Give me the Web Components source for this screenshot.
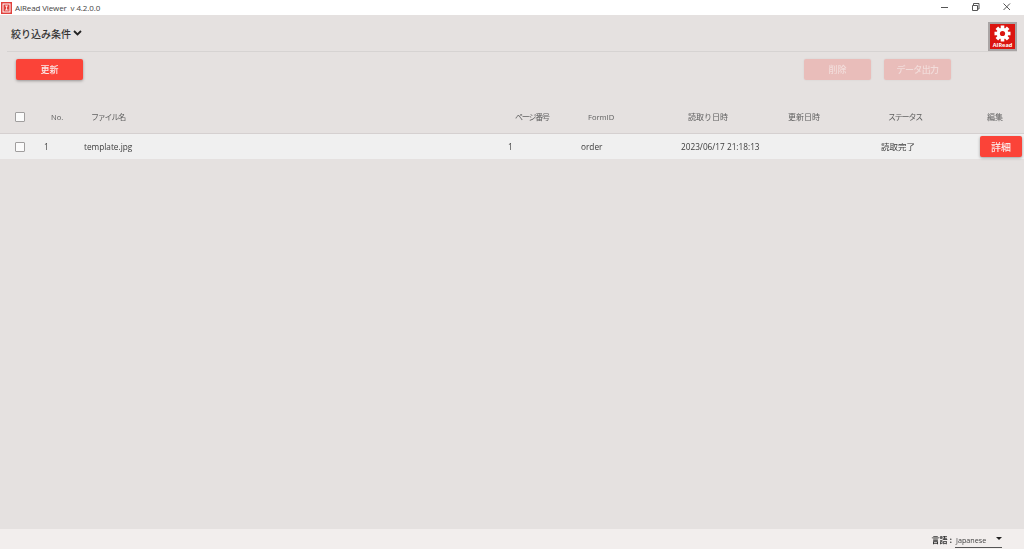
<!DOCTYPE html>
<html lang="ja">
<head>
<meta charset="utf-8">
<title>AIRead Viewer</title>
<style>
html, body { margin: 0; height: 100%; }
body {
  font-family: "Open Sans", "Noto Sans CJK JP", sans-serif;
  background: #e5e1e0;
  overflow: hidden;
}
ar-app { height: 549px; }
</style>
</head>
<body>
<ar-app>
  <ar-titlebar title-text="AIRead Viewer  v 4.2.0.0"></ar-titlebar>
  <ar-filter label="絞り込み条件"></ar-filter>
  <ar-toolbar>
    <ar-button slot="left">更新</ar-button>
    <ar-button slot="right" disabled>削除</ar-button>
    <ar-button slot="right" disabled style="letter-spacing:-.6px">データ出力</ar-button>
  </ar-toolbar>
  <ar-table>
    <ar-row head>
      <ar-check></ar-check>
      <span class="lat">No.</span><span class="kana">ファイル名</span><span class="kana">ページ番号</span><span class="lat">FormID</span>
      <span>読取り日時</span><span>更新日時</span><span class="kana">ステータス</span><span>編集</span>
    </ar-row>
    <ar-row>
      <ar-check></ar-check>
      <span>1</span><span>template.jpg</span><span>1</span><span>order</span>
      <span>2023/06/17 21:18:13</span><span></span><span class="ja">読取完了</span>
      <ar-button small>詳細</ar-button>
    </ar-row>
  </ar-table>
  <ar-footer label="言語 :" value="Japanese"></ar-footer>
</ar-app>

<script>
class App extends HTMLElement {
  connectedCallback() {
    this.attachShadow({ mode: 'open' }).innerHTML = `
      <style>
        :host { display: flex; flex-direction: column; width: 1024px; background: #e5e1e0; filter: blur(.3px); }
        .grow { flex: 1; display: flex; flex-direction: column; min-height: 0; }
      </style>
      <div class="grow"><slot></slot></div>`;
  }
}

class Titlebar extends HTMLElement {
  connectedCallback() {
    this.attachShadow({ mode: 'open' }).innerHTML = `
      <style>
        :host { display: flex; align-items: center; height: 15px; background: #fff; flex: none; }
        .logo { margin-left: 1px; width: 11px; height: 12px; display: block; }
        .name { margin-left: 3px; font: 8px "Open Sans", sans-serif; letter-spacing: -.13px; color: #444; white-space: pre; }
        .win { margin-left: auto; margin-right: 2px; display: flex; }
        .win svg { width: 31px; height: 15px; display: block; }
      </style>
      <svg class="logo" viewBox="0 0 11 12">
        <rect width="11" height="12" fill="#e0413c"/>
        <rect x="2" y="2" width="7" height="8" fill="none" stroke="#fff" stroke-width="1"/>
        <path d="M4 4h3M5.5 4v4M4 8h3.5" stroke="#fff" stroke-width=".8" fill="none"/>
      </svg>
      <span class="name">${this.getAttribute('title-text')}</span>
      <div class="win">
        <svg viewBox="0 0 31 15"><path d="M12 7.5h7" stroke="#555" stroke-width="1"/></svg>
        <svg viewBox="0 0 31 15"><path d="M13.5 5V3.5h5.5V9h-1.5M12.5 5.5h5V10.5h-5z" stroke="#555" stroke-width="1" fill="none"/></svg>
        <svg viewBox="0 0 31 15"><path d="M12.5 3.5l6.5 6.5M19 3.5l-6.5 6.5" stroke="#555" stroke-width="1" fill="none"/></svg>
      </div>`;
  }
}

class Filter extends HTMLElement {
  connectedCallback() {
    this.attachShadow({ mode: 'open' }).innerHTML = `
      <style>
        :host { display: flex; align-items: center; height: 36px; margin: 0 7px; padding-left: 4px;
          border-bottom: 1px solid #d6d3d2; flex: none; }
        .lab { font: 500 10px "Noto Sans CJK JP", sans-serif; color: #333; }
        .chev { width: 9px; height: 6px; margin-left: 2px; }
        .gear { margin-left: auto; align-self: flex-end; width: 29px; height: 29px; display: block; }
      </style>
      <span class="lab">${this.getAttribute('label')}</span>
      <svg class="chev" viewBox="0 0 9 6"><path d="M1 1l3.5 3.5L8 1" stroke="#222" stroke-width="1.8" fill="none"/></svg>
      <svg class="gear" viewBox="0 0 29 29">
        <rect width="29" height="29" fill="#a9a5a5"/>
        <rect x="2" y="2" width="25" height="25" fill="#db1510"/>
        <g transform="translate(14.5 11.5)" fill="#fff">
          <rect x="-1.8" y="-8" width="3.6" height="16"/>
          <rect x="-1.8" y="-8" width="3.6" height="16" transform="rotate(45)"/>
          <rect x="-1.8" y="-8" width="3.6" height="16" transform="rotate(90)"/>
          <rect x="-1.8" y="-8" width="3.6" height="16" transform="rotate(135)"/>
          <circle r="5.8"/>
          <circle r="2.6" fill="#db1510"/>
        </g>
        <text x="14.5" y="25.3" text-anchor="middle" font-family="Open Sans" font-weight="700" font-size="5.6" fill="#fff">AIRead</text>
      </svg>`;
  }
}

class Toolbar extends HTMLElement {
  connectedCallback() {
    this.attachShadow({ mode: 'open' }).innerHTML = `
      <style>
        :host { display: flex; justify-content: space-between; padding: 7px 73px 0 16px; height: 48px; box-sizing: border-box; flex: none; }
        .side { display: flex; gap: 13px; align-items: flex-start; }
      </style>
      <div class="side"><slot name="left"></slot></div>
      <div class="side"><slot name="right"></slot></div>`;
  }
}

class Btn extends HTMLElement {
  connectedCallback() {
    const off = this.hasAttribute('disabled');
    const small = this.hasAttribute('small');
    this.attachShadow({ mode: 'open' }).innerHTML = `
      <style>
        :host { display: block; flex: none; }
        div { display: flex; align-items: center; justify-content: center; border-radius: 2px;
          width: ${small ? 42 : 67}px; height: 21px;
          font: 500 ${small ? 10 : 9}px "Noto Sans CJK JP", sans-serif;
          background: ${off ? '#e9bdba' : '#fb4338'};
          color: ${off ? '#f2dcda' : '#fbe9e7'};
          box-shadow: ${off ? '0 0 2px rgba(0,0,0,.08)' : '0 1px 3px rgba(0,0,0,.35)'}; }
      </style>
      <div><slot></slot></div>`;
  }
}

class Table extends HTMLElement {
  connectedCallback() {
    this.attachShadow({ mode: 'open' }).innerHTML = `
      <style>:host { display: block; flex: 1; min-height: 0; }</style>
      <slot></slot>`;
  }
}

class Row extends HTMLElement {
  connectedCallback() {
    const head = this.hasAttribute('head');
    this.attachShadow({ mode: 'open' }).innerHTML = `
      <style>
        :host { display: grid; box-sizing: border-box; align-items: center;
          grid-template-columns: 29px 40px 424px 73px 100px 100px 100px 99px 44px;
          padding-left: 15px;
          font-size: ${head ? 8 : 8.25}px;
          color: ${head ? '#5f5f5f' : '#3c3c3c'};
          height: ${head ? 34 : 25}px;
          background: ${head ? 'transparent' : '#f0f0f0'};
          ${head ? 'border-bottom: 1px solid #d5d0d0;' : ''} }
        ::slotted(span) { ${head ? 'padding-left: 7px;' : ''} white-space: nowrap; line-height: 12px; }
        ::slotted(.lat) { font-size: 7.6px; }
        ::slotted(.ja) { font-size: 8.5px; }
        ::slotted(.kana) { letter-spacing: -1.2px; }
      </style>
      <slot></slot>`;
  }
}

class Check extends HTMLElement {
  connectedCallback() {
    this.attachShadow({ mode: 'open' }).innerHTML = `
      <style>
        :host { display: block; width: 10px; height: 10px; box-sizing: border-box;
          border: 1px solid #a09e9e; border-radius: 1px; background: #fbfbfb; }
      </style>`;
  }
}

class Footer extends HTMLElement {
  connectedCallback() {
    this.attachShadow({ mode: 'open' }).innerHTML = `
      <style>
        :host { display: flex; align-items: center; justify-content: flex-end; height: 20px; background: #f2eeed;
          padding-right: 22px; flex: none; font-family: "Noto Sans CJK JP", sans-serif; color: #333; }
        .lab { font-size: 8px; font-weight: 700; margin-right: 3px; }
        .sel { width: 47px; height: 15px; margin-top: 3px; padding-left: 1px; box-sizing: border-box; border-bottom: 1px solid #555;
          display: flex; align-items: center; justify-content: space-between;
          font: 7.2px "Open Sans", sans-serif; color: #444; }
        .arr { width: 0; height: 0; border: 3px solid transparent; border-top: 3px solid #222; border-bottom: 0; margin-bottom: 3px; }
      </style>
      <span class="lab">${this.getAttribute('label')}</span>
      <div class="sel"><span>${this.getAttribute('value')}</span><i class="arr"></i></div>`;
  }
}

customElements.define('ar-app', App);
customElements.define('ar-titlebar', Titlebar);
customElements.define('ar-filter', Filter);
customElements.define('ar-toolbar', Toolbar);
customElements.define('ar-button', Btn);
customElements.define('ar-table', Table);
customElements.define('ar-row', Row);
customElements.define('ar-check', Check);
customElements.define('ar-footer', Footer);
</script>
</body>
</html>
